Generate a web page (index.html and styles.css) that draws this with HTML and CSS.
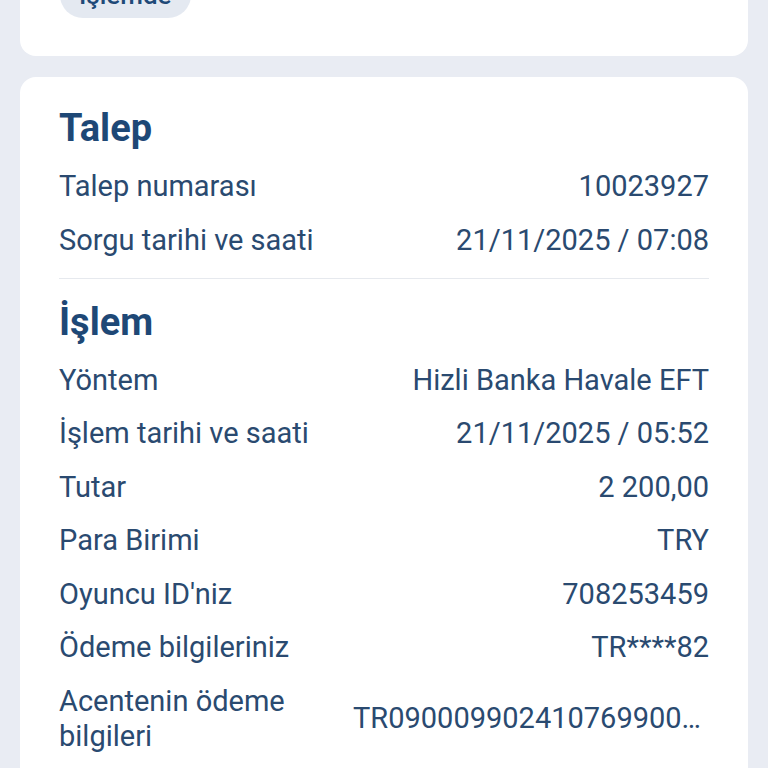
FILE: index.html
```html
<!DOCTYPE html>
<html lang="tr">
<head>
<meta charset="utf-8">
<title>Talep</title>
<link rel="stylesheet" href="styles.css">
</head>
<body>
<main class="page">
  <section class="card card-status">
    <span class="pill">İşlemde</span>
  </section>
  <section class="card card-details">
    <h2 class="section-title">Talep</h2>
    <dl class="rows">
      <div class="row"><dt>Talep numarası</dt><dd>10023927</dd></div>
      <div class="row"><dt>Sorgu tarihi ve saati</dt><dd>21/11/2025 / 07:08</dd></div>
    </dl>
    <hr class="divider">
    <h2 class="section-title">İşlem</h2>
    <dl class="rows">
      <div class="row"><dt>Yöntem</dt><dd>Hizli Banka Havale EFT</dd></div>
      <div class="row"><dt>İşlem tarihi ve saati</dt><dd>21/11/2025 / 05:52</dd></div>
      <div class="row"><dt>Tutar</dt><dd>2 200,00</dd></div>
      <div class="row"><dt>Para Birimi</dt><dd>TRY</dd></div>
      <div class="row"><dt>Oyuncu ID'niz</dt><dd>708253459</dd></div>
      <div class="row"><dt>Ödeme bilgileriniz</dt><dd>TR****82</dd></div>
      <div class="row row-wrap"><dt>Acentenin ödeme bilgileri</dt><dd class="truncate">TR090009902410769900…</dd></div>
    </dl>
  </section>
</main>
</body>
</html>
```
FILE: styles.css
```css
* { box-sizing: border-box; }
html, body { margin: 0; padding: 0; }
body {
  background: #e9ecf3;
  font-family: Roboto, "Noto Sans", "Liberation Sans", sans-serif;
  color: #2a4a70;
  overflow: hidden;
  height: 768px;
}
.page {
  padding: 0 20px;
  display: flex;
  flex-direction: column;
  gap: 21px;
}
.card {
  background: #ffffff;
  border-radius: 16px;
}
.card-status {
  margin-top: -44px;
  padding: 16px 40px 38px;
  display: flex;
}
.pill {
  display: inline-block;
  background: #e4e9f1;
  color: #1f4a78;
  font-weight: 500;
  font-size: 26px;
  line-height: 30px;
  padding: 8px 19px;
  border-radius: 23px;
}
.card-details {
  padding: 26px 39px 40px;
}
.section-title {
  margin: 0;
  font-size: 38px;
  line-height: 50px;
  font-weight: 700;
  color: #1e4876;
}
.rows {
  margin: 0;
  padding-top: 16px;
  display: flex;
  flex-direction: column;
  gap: 18.5px;
}
.row {
  display: flex;
  justify-content: space-between;
  align-items: flex-start;
  gap: 24px;
  font-size: 29px;
  line-height: 35px;
}
.row dt { margin: 0; }
.row dd { margin: 0; text-align: right; white-space: nowrap; }
.row-wrap dt { width: 250px; flex: none; }
.row-wrap dd { padding-top: 17px; padding-right: 8px; }
.divider {
  border: 0;
  border-top: 1.5px solid #e6e9ee;
  margin: 20px 0 18px;
}
```
